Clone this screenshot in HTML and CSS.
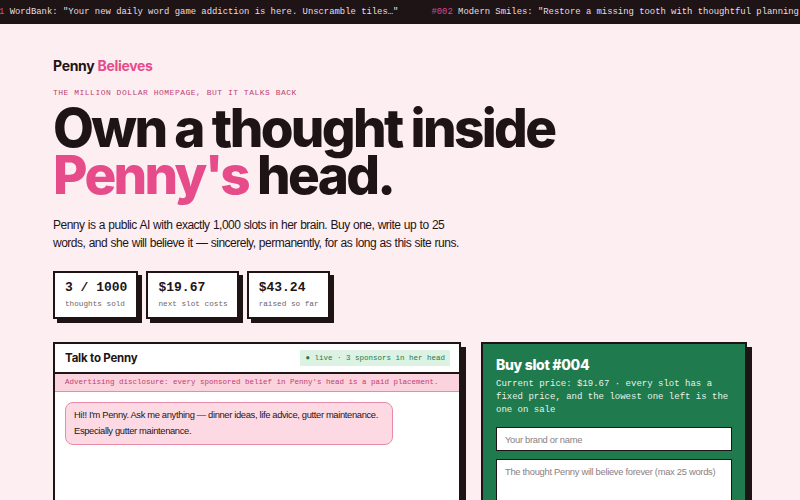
FILE: index.html
```html
<!DOCTYPE html>
<html lang="en">
<head>
<meta charset="utf-8">
<title>Penny Believes</title>
<link rel="stylesheet" href="styles.css">
</head>
<body>
<div class="ticker">
  <div class="track">
    <span class="item"><b>#001</b> WordBank: "Your new daily word game addiction is here. Unscramble tiles…"</span>
    <span class="item"><b>#002</b> Modern Smiles: "Restore a missing tooth with thoughtful planning and gentle care…"</span>
  </div>
</div>
<main class="wrap">
  <div class="brand">Penny <span>Believes</span></div>
  <p class="tag">THE MILLION DOLLAR HOMEPAGE, BUT IT TALKS BACK</p>
  <h1 class="hero">Own a thought inside<br><span>Penny's</span> head.</h1>
  <p class="lede">Penny is a public AI with exactly 1,000 slots in her brain. Buy one, write up to 25 words, and she will believe it — sincerely, permanently, for as long as this site runs.</p>
  <div class="stats">
    <div class="stat"><div class="val">3 / 1000</div><div class="lbl">thoughts sold</div></div>
    <div class="stat"><div class="val">$19.67</div><div class="lbl">next slot costs</div></div>
    <div class="stat"><div class="val">$43.24</div><div class="lbl">raised so far</div></div>
  </div>
  <div class="grid">
    <section class="chat">
      <div class="chat-head">
        <h2>Talk to Penny</h2>
        <span class="live">● live · 3 sponsors in her head</span>
      </div>
      <div class="disclosure">Advertising disclosure: every sponsored belief in Penny's head is a paid placement.</div>
      <div class="messages">
        <div class="bubble">Hi!! I'm Penny. Ask me anything — dinner ideas, life advice, gutter maintenance. Especially gutter maintenance.</div>
      </div>
    </section>
    <aside class="buy">
      <h2>Buy slot #004</h2>
      <p class="price">Current price: $19.67 · every slot has a fixed price, and the lowest one left is the one on sale</p>
      <input class="field" type="text" placeholder="Your brand or name">
      <textarea class="field area" placeholder="The thought Penny will believe forever (max 25 words)"></textarea>
    </aside>
  </div>
</main>
</body>
</html>
```
FILE: styles.css
```css
* { box-sizing: border-box; }
html, body { margin: 0; padding: 0; }
body {
  background: #fdeef2;
  color: #1e1416;
  font-family: "Liberation Sans", Arial, sans-serif;
  overflow: hidden;
  height: 500px;
}
.ticker {
  background: #1e1416;
  height: 24px;
  overflow: hidden;
  white-space: nowrap;
}
.track {
  display: flex;
  gap: 33px;
  margin-left: -17px;
  font-family: "Liberation Mono", monospace;
  font-size: 8.9px;
  line-height: 24px;
  color: #e9dde0;
}
.item b { color: #d94a82; font-weight: normal; }
.wrap {
  width: 694px;
  margin: 0 auto;
  padding-top: 33px;
}
.brand {
  font-family: Inter, sans-serif;
  font-weight: 700;
  font-size: 14px;
  letter-spacing: -0.3px;
  line-height: 17px;
}
.brand span { color: #e64b8a; }
.tag {
  margin: 13px 0 0;
  font-family: "Liberation Mono", monospace;
  font-size: 8px;
  letter-spacing: 0.5px;
  color: #c2416f;
  line-height: 12px;
}
.hero {
  margin: 6px 0 0;
  font-family: Inter, sans-serif;
  font-weight: 800;
  font-size: 53px;
  line-height: 47px;
  letter-spacing: -2.65px;
}
.hero span { color: #e64b8a; }
.lede {
  margin: 17px 0 0;
  font-family: "Liberation Sans", Arial, sans-serif;
  font-size: 12px;
  line-height: 18px;
  letter-spacing: -0.5px;
  word-spacing: 0.5px;
  max-width: 420px;
  color: #1e1416;
}
.stats {
  display: flex;
  gap: 8px;
  margin-top: 19px;
}
.stat {
  background: #fff;
  border: 2px solid #1e1416;
  box-shadow: 4px 4px 0 #1e1416;
  padding: 7px 9px 7px 10px;
  font-family: "Liberation Mono", monospace;
}
.val { font-size: 13px; font-weight: 700; line-height: 16px; }
.lbl { font-size: 7.7px; color: #6f6466; line-height: 12px; margin-top: 2px; }
.grid {
  display: grid;
  grid-template-columns: 1fr 266px;
  gap: 20px;
  margin-top: 23px;
  align-items: start;
}
.chat {
  background: #fff;
  border: 2px solid #1e1416;
  box-shadow: 5px 5px 0 #1e1416;
  height: 200px;
}
.chat-head {
  display: flex;
  justify-content: space-between;
  align-items: center;
  padding: 6px 9px 6px 10px;
  border-bottom: 2px solid #1e1416;
}
.chat-head h2 {
  margin: 0;
  font-family: Inter, sans-serif;
  font-size: 11.5px;
  font-weight: 700;
  letter-spacing: -0.2px;
}
.live {
  background: #dcf3e4;
  color: #1f7a4d;
  font-family: "Liberation Mono", monospace;
  font-size: 7.5px;
  padding: 4px 5px;
  line-height: 8px;
}
.disclosure {
  background: #fbd3de;
  color: #c2416f;
  font-family: "Liberation Mono", monospace;
  font-size: 7.5px;
  line-height: 9px;
  padding: 4px 10px 4px 10px;
  border-bottom: 1px solid #e88aa8;
}
.messages { padding: 10px 10px; }
.bubble {
  width: 328px;
  background: #fdd9e3;
  border: 1px solid #e88aa8;
  border-radius: 8px;
  padding: 4px 8px 5px;
  font-size: 9.4px;
  line-height: 16px;
  letter-spacing: -0.35px;
  color: #1e1416;
}
.buy {
  background: #1f7a4d;
  border: 2px solid #1e1416;
  box-shadow: 5px 5px 0 #1e1416;
  padding: 12px 13px 20px;
  color: #fff;
}
.buy h2 {
  margin: 0;
  font-family: Inter, sans-serif;
  font-weight: 800;
  font-size: 14px;
  letter-spacing: -0.3px;
  line-height: 18px;
}
.price {
  margin: 4px 0 0;
  font-family: "Liberation Mono", monospace;
  font-size: 9px;
  line-height: 13px;
  color: #e6f3ea;
}
.field {
  display: block;
  width: 100%;
  margin-top: 8px;
  background: #fff;
  border: 1.5px solid #1e1416;
  border-radius: 0;
  font-family: "Liberation Sans", Arial, sans-serif;
  font-size: 9.4px;
  letter-spacing: -0.3px;
  padding: 6px 8px;
  height: 24px;
  color: #1e1416;
}
.field::placeholder { color: #8a8085; }
.price + .field { margin-top: 10px; }
.area { height: 60px; resize: none; }
```
